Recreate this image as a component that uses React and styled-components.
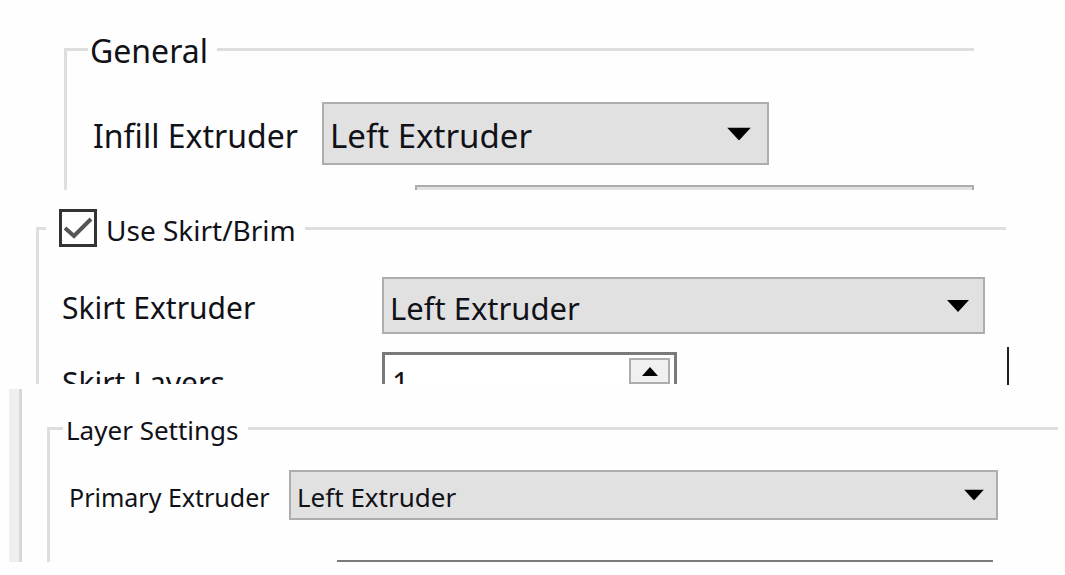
import React from "react";
import styled, { createGlobalStyle } from "styled-components";

const GlobalStyle = createGlobalStyle`
  *, *::before, *::after { box-sizing: border-box; }
  body {
    margin: 0;
    background: #fefefe;
    color: #111118;
    font-family: "Noto Sans", Tahoma, sans-serif;
  }
`;

const Page = styled.main`
  display: flex;
  flex-direction: column;
`;

const Section = styled.section`
  display: flex;
  align-items: stretch;
  padding: ${(p) => p.$pad};
`;

const Group = styled.fieldset`
  flex: 1;
  min-width: 0;
  margin: ${(p) => p.$margin || "0"};
  padding: ${(p) => p.$top}px 0 0;
  border: 3px solid #dedede;
  border-right: 0;
  border-bottom: 0;
  font-size: ${(p) => p.$size}px;
`;

const Legend = styled.legend`
  display: flex;
  align-items: center;
  height: 44px;
  margin-left: ${(p) => p.$indent}px;
  padding: 0 9px 0 ${(p) => p.$lead}px;
  font-size: ${(p) => p.$size}px;
  line-height: 40px;
`;

const LegendText = styled.span`
  padding-top: 3px;
`;

const CheckLabel = styled.label`
  display: flex;
  align-items: center;
  gap: 9px;
`;

const CheckBox = styled.span`
  display: grid;
  width: 38px;
  height: 38px;

  > * {
    grid-area: 1 / 1;
  }

  input {
    appearance: none;
    width: 38px;
    height: 38px;
    margin: 0;
    border: 3px solid #333;
    background: #fff;
  }

  svg {
    visibility: hidden;
    pointer-events: none;
  }

  input:checked + svg {
    visibility: visible;
  }
`;

const Row = styled.div`
  display: flex;
  align-items: flex-start;
  height: ${(p) => p.$clip || p.$height}px;
  margin-top: ${(p) => p.$gap || 0}px;
  padding: 0 ${(p) => p.$right}px 0 ${(p) => p.$left}px;
  overflow: ${(p) => (p.$clip ? "hidden" : "visible")};
`;

const Label = styled.label`
  flex: none;
  width: ${(p) => p.$width}px;
  padding-top: 3px;
  line-height: ${(p) => p.$height - 2}px;
  white-space: nowrap;
`;

const SelectBox = styled.div`
  position: relative;
  flex: 1;
  min-width: 0;
  height: ${(p) => p.$height}px;

  svg {
    position: absolute;
    top: 50%;
    right: ${(p) => p.$inset}px;
    transform: translateY(-50%);
    pointer-events: none;
  }
`;

const Select = styled.select`
  appearance: none;
  display: block;
  width: 100%;
  height: 100%;
  margin: 0;
  padding: 4px 48px 0 6px;
  border: 2px solid #adadad;
  border-radius: 0;
  background: #e1e1e1;
  color: inherit;
  font-family: inherit;
  font-size: ${(p) => p.$size}px;
`;

const Spin = styled.div`
  display: flex;
  width: 295px;
  height: 58px;
  padding: 3px 4px 3px 0;
  border: 3px solid #7a7a7a;
  background: #fff;
`;

const NumberInput = styled.input`
  flex: 1;
  min-width: 0;
  padding: 3px 0 0 7px;
  border: 0;
  background: transparent;
  color: inherit;
  font-family: inherit;
  font-size: 30px;
`;

const SpinButtons = styled.div`
  display: flex;
  flex-direction: column;
  width: 41px;
`;

const SpinButton = styled.button`
  display: flex;
  align-items: center;
  justify-content: center;
  height: 26px;
  padding: 0;
  border: 2px solid #adadad;
  background: #f0f0f0;
`;

const Field = styled.input`
  flex: 1;
  min-width: 0;
  height: 50px;
  border: 3px solid #7a7a7a;
  background: #fff;
  font-family: inherit;
  font-size: 26px;
`;

const Caret = styled.div`
  align-self: flex-end;
  width: 2px;
  height: 38px;
  margin: 0 0 -1px 1px;
  background: #222;
`;

const Splitter = styled.div`
  width: 13px;
  border-right: 3px solid #d8d8d8;
  background: #eeeeee;
`;

function Triangle({ width, height, up }) {
  const points = up
    ? `0,${height} ${width},${height} ${width / 2},0`
    : `0,0 ${width},0 ${width / 2},${height}`;
  return (
    <svg width={width} height={height} aria-hidden="true">
      <polygon points={points} fill="#000" />
    </svg>
  );
}

function ExtruderSelect({ id, label, height, size, inset, arrow }) {
  return (
    <SelectBox $height={height} $inset={inset}>
      <Select id={id} aria-label={label} $size={size} defaultValue="left">
        <option value="left">Left Extruder</option>
        <option value="right">Right Extruder</option>
      </Select>
      <Triangle width={arrow} height={arrow / 2 + 1} />
    </SelectBox>
  );
}

export default function App() {
  return (
    <Page>
      <GlobalStyle />

      <Section $pad="27px 91px 0 64px">
        <Group $top={31} $size={32}>
          <Legend $indent={21} $lead={2} $size={32}>
            <LegendText>General</LegendText>
          </Legend>
          <Row $height={63} $left={26} $right={205}>
            <Label htmlFor="infill" $width={229} $height={63}>Infill Extruder</Label>
            <ExtruderSelect id="infill" height={63} size={33} inset={18} arrow={24} />
          </Row>
          <Row $clip={5} $gap={20} $left={348} $right={0}>
            <ExtruderSelect id="infill-next" label="Infill pattern" height={63} size={33} inset={18} arrow={24} />
          </Row>
        </Group>
      </Section>

      <Section $pad="16px 56px 0 36px">
        <Group $top={27} $size={30}>
          <Legend $indent={7} $lead={13} $size={28}>
            <CheckLabel>
              <CheckBox>
                <input type="checkbox" defaultChecked />
                <svg width="38" height="38" viewBox="0 0 38 38" aria-hidden="true">
                  <path d="M6 19 L15 27 L32 10" fill="none" stroke="#555" strokeWidth="4" />
                </svg>
              </CheckBox>
              <LegendText>Use Skirt/Brim</LegendText>
            </CheckLabel>
          </Legend>
          <Row $height={57} $left={23} $right={21}>
            <Label htmlFor="skirt" $width={320} $height={57}>Skirt Extruder</Label>
            <ExtruderSelect id="skirt" height={57} size={31} inset={16} arrow={22} />
          </Row>
          <Row $clip={32} $gap={18} $left={23} $right={21}>
            <Label htmlFor="layers" $width={320} $height={57}>Skirt Layers</Label>
            <Spin>
              <NumberInput id="layers" type="text" inputMode="numeric" defaultValue="1" />
              <SpinButtons>
                <SpinButton type="button" aria-label="Increase">
                  <Triangle width={16} height={9} up />
                </SpinButton>
              </SpinButtons>
            </Spin>
          </Row>
        </Group>
        <Caret />
      </Section>

      <Section $pad="5px 7px 13px 9px">
        <Splitter />
        <Group $margin="17px 0 0 25px" $top={20} $size={25}>
          <Legend $indent={13} $lead={3} $size={26}>
            <LegendText>Layer Settings</LegendText>
          </Legend>
          <Row $height={50} $left={19} $right={60}>
            <Label htmlFor="primary" $width={220} $height={50}>Primary Extruder</Label>
            <ExtruderSelect id="primary" height={50} size={26} inset={14} arrow={20} />
          </Row>
          <Row $clip={2} $gap={40} $left={287} $right={65}>
            <Field type="text" aria-label="Layer height" />
          </Row>
        </Group>
      </Section>
    </Page>
  );
}
